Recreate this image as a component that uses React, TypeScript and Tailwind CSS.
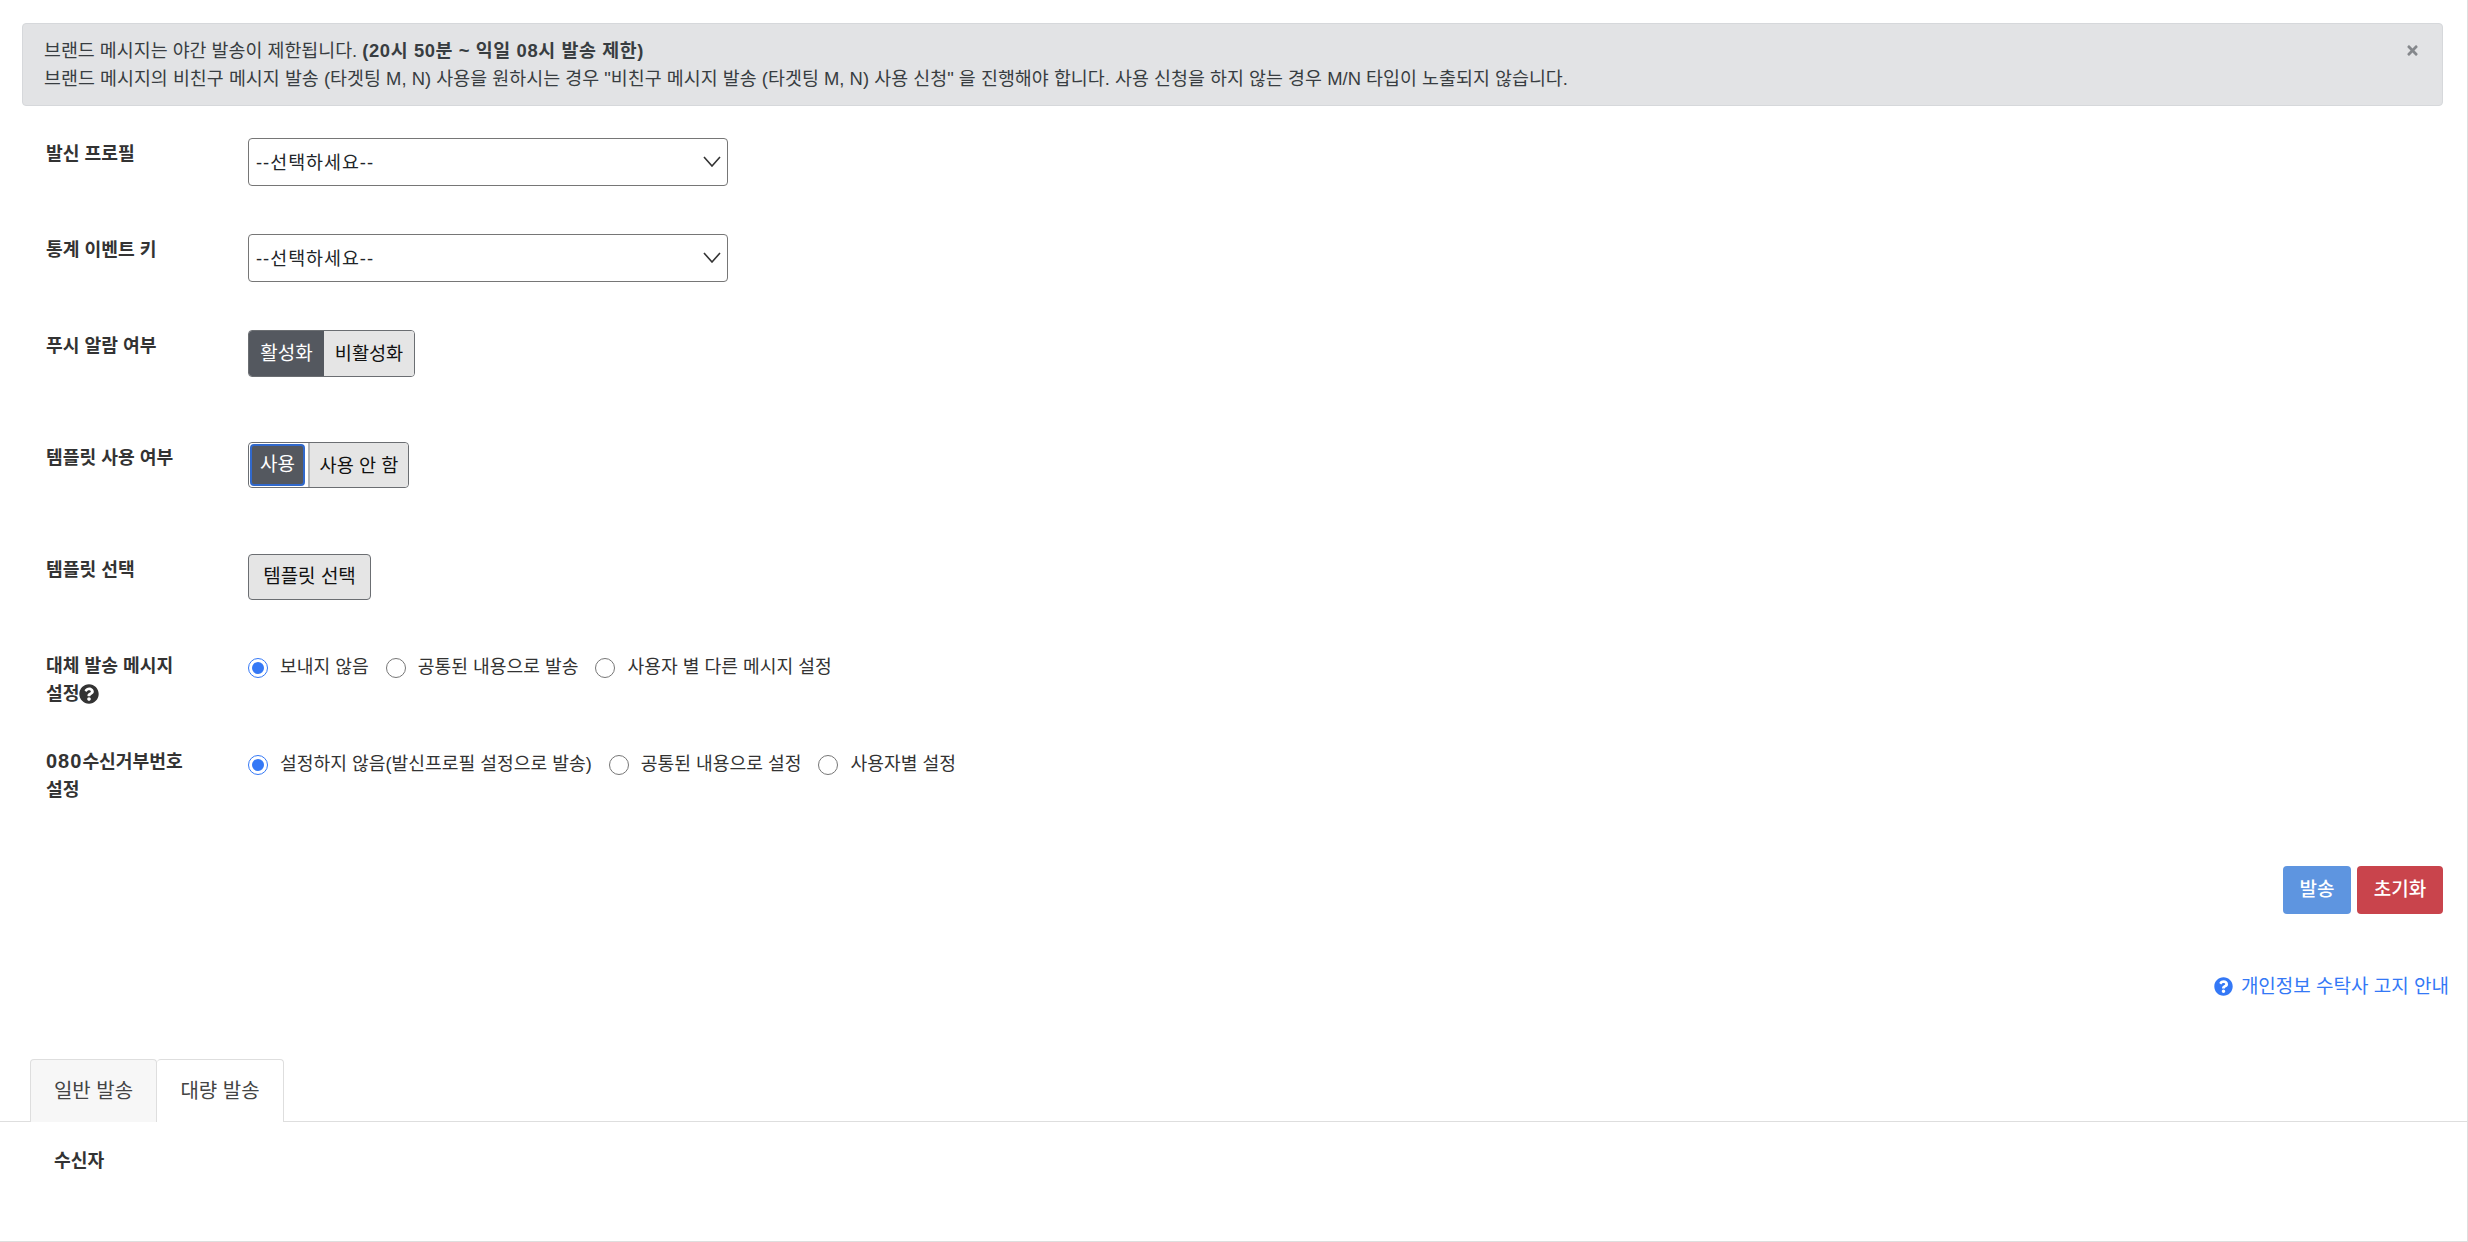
import React from 'react';
import { FaQuestionCircle, FaTimes } from 'react-icons/fa';

const font = "font-['Liberation_Sans','Noto_Sans_CJK_KR',sans-serif]";

const Label: React.FC<{ children: React.ReactNode }> = ({ children }) => (
  <div className="w-[202px] shrink-0 pt-[2px] text-[18.2px] leading-[28px] font-bold text-[#333]">{children}</div>
);

const Select: React.FC = () => (
  <div className="relative w-[480px] h-[48px]">
    <select className="w-full h-full appearance-none rounded-[4px] border border-[#767676] bg-white pl-[7px] pt-[2px] text-[18.4px] tracking-[1px] text-[#212529] outline-none">
      <option>--선택하세요--</option>
    </select>
    <svg className="absolute right-[7px] top-[18px] w-[18px] h-[11px] pointer-events-none" viewBox="0 0 18 11" fill="none" stroke="#333" strokeWidth="1.6">
      <path d="M1 1l8 9 8-9" />
    </svg>
  </div>
);

const Radio: React.FC<{ name: string; label: string; checked?: boolean; gap: string }> = ({ name, label, checked, gap }) => (
  <label className={`flex items-start ${gap}`}>
    <input type="radio" name={name} defaultChecked={checked} className="w-[20px] h-[20px] m-0 mt-[8px] accent-[#3478f6]" />
    <span className="ml-[12px] mt-[3px] text-[18.2px] leading-[28px] text-[#333]">{label}</span>
  </label>
);

const App: React.FC = () => {
  return (
    <div className={`${font} w-[2468px] h-[1242px] overflow-hidden bg-white border-r border-b border-[#dedede] flex flex-col`}>
      {/* notice */}
      <div className="mt-[23px] ml-[22px] mr-[24px] h-[83px] shrink-0 flex justify-between rounded-[4px] border border-[#d6d8db] bg-[#e2e3e5] pl-[21px] pr-[22px] pt-[13px] text-[18.4px] leading-[28px] text-[#383d41]">
        <div>
          <div>브랜드 메시지는 야간 발송이 제한됩니다. <b className="font-bold tracking-[0.6px]">(20시 50분 ~ 익일 08시 발송 제한)</b></div>
          <div className="tracking-[0.03px]">브랜드 메시지의 비친구 메시지 발송 (타겟팅 M, N) 사용을 원하시는 경우 "비친구 메시지 발송 (타겟팅 M, N) 사용 신청" 을 진행해야 합니다. 사용 신청을 하지 않는 경우 M/N 타입이 노출되지 않습니다.</div>
        </div>
        <FaTimes className="mt-[6px] w-[15px] h-[15px] text-[#85888c]" />
      </div>

      {/* form */}
      <div className="pl-[46px] flex flex-col">
        <div className="mt-[32px] flex">
          <Label>발신 프로필</Label>
          <Select />
        </div>
        <div className="mt-[48px] flex">
          <Label>통계 이벤트 키</Label>
          <Select />
        </div>
        <div className="mt-[48px] flex">
          <Label>푸시 알람 여부</Label>
          <div className="flex h-[47px] w-[167px] overflow-hidden rounded-[4px] border border-[#6b6e72] text-[19px]">
            <button className="w-[75px] bg-[#54585f] pt-[1px] text-white">활성화</button>
            <button className="flex-1 bg-[#e5e5e5] pt-[1px] text-[18.6px] text-[#111]">비활성화</button>
          </div>
        </div>
        <div className="mt-[65px] flex">
          <Label>템플릿 사용 여부</Label>
          <div className="flex h-[46px] w-[161px] rounded-[4px] border border-[#6b6e72] text-[19px]">
            <div className="w-[59px] h-[44px] rounded-[4px] border border-white bg-white">
              <button className="block w-[55px] h-[42px] rounded-[4px] border-[2px] border-[#3169cc] bg-[#54585f] pt-[1px] text-white">사용</button>
            </div>
            <button className="flex-1 rounded-r-[4px] border-l-2 border-[#b4b6b8] bg-[#e5e5e5] pt-[1px] text-[18.6px] text-[#111]">사용 안 함</button>
          </div>
        </div>
        <div className="mt-[66px] flex">
          <Label>템플릿 선택</Label>
          <button className="h-[46px] w-[123px] rounded-[4px] border border-[#6b6e72] bg-[#e5e5e5] pt-[1px] text-[19px] text-[#111]">템플릿 선택</button>
        </div>
        <div className="mt-[50px] flex">
          <Label>
            대체 발송 메시지
            <br />
            <span className="inline-flex items-center">설정<FaQuestionCircle className="w-[20px] h-[20px] text-[#333]" /></span>
          </Label>
          <div className="flex items-start">
            <Radio name="alt" label="보내지 않음" checked gap="mr-[17px]" />
            <Radio name="alt" label="공통된 내용으로 발송" gap="mr-[17px]" />
            <Radio name="alt" label="사용자 별 다른 메시지 설정" gap="" />
          </div>
        </div>
        <div className="mt-[37px] flex">
          <Label>
            <span className="text-[20px] tracking-[1px]">080</span>수신거부번호
            <br />
            설정
          </Label>
          <div className="flex items-start pt-[2px]">
            <Radio name="rej" label="설정하지 않음(발신프로필 설정으로 발송)" checked gap="mr-[17px]" />
            <Radio name="rej" label="공통된 내용으로 설정" gap="mr-[17px]" />
            <Radio name="rej" label="사용자별 설정" gap="" />
          </div>
        </div>
      </div>

      {/* actions */}
      <div className="mt-[62px] mr-[24px] flex justify-end gap-[6px]">
        <button className="h-[48px] w-[68px] rounded-[4px] bg-[#5e95e0] pt-[1px] text-[19px] font-medium text-white">발송</button>
        <button className="h-[48px] w-[86px] rounded-[4px] bg-[#c9444c] pt-[1px] text-[19px] font-medium text-white">초기화</button>
      </div>
      <div className="mt-[58px] mr-[18px] flex items-center justify-end text-[19px] leading-[28px] text-[#3478f6]">
        <FaQuestionCircle className="w-[19px] h-[19px] mr-[8px]" />
        <span className="pt-[1px]">개인정보 수탁사 고지 안내</span>
      </div>

      {/* tabs */}
      <div className="mt-[58px] flex h-[63px] shrink-0 border-b border-[#dedede] pl-[30px]">
        <div className="w-[127px] h-[63px] rounded-t-[4px] border border-b-0 border-[#dedede] bg-[#f7f7f7] text-center text-[20px] leading-[62px] text-[#444]">일반 발송</div>
        <div className="w-[127px] h-[63px] rounded-t-[4px] border border-b-0 border-l-0 border-[#dedede] bg-white text-center text-[20px] leading-[62px] text-[#444]">대량 발송</div>
      </div>
      <div className="pl-[54px] pt-[25px] text-[18.2px] leading-[28px] font-bold text-[#333]">수신자</div>
    </div>
  );
};

export default App;
